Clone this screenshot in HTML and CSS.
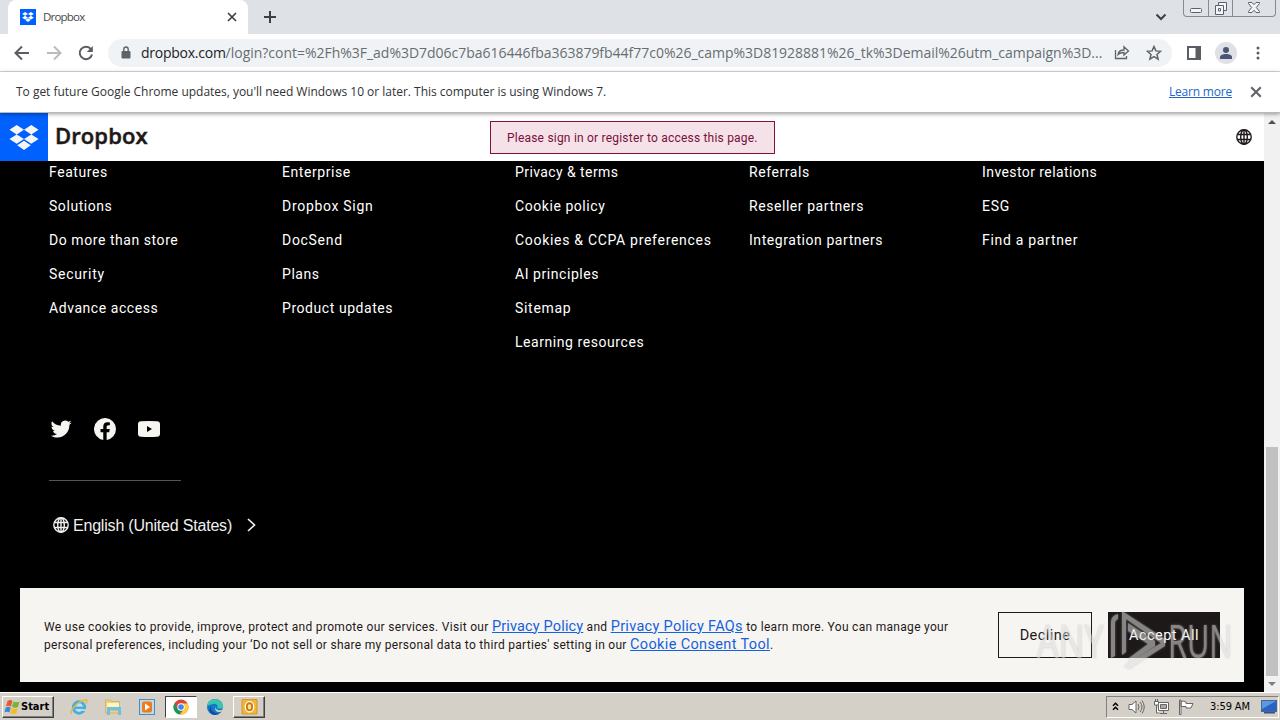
FILE: index.html
```html
<!DOCTYPE html>
<html lang="en">
<head>
<meta charset="utf-8">
<title>Dropbox</title>
<link rel="stylesheet" href="styles.css">
</head>
<body>
<svg class="defs" width="0" height="0">
  <symbol id="dropbox" viewBox="0 0 28 24"><path d="M7 0l7 4.500L7 9 0 4.500zM21 0l7 4.500L21 9l-7-4.500zM7 9l7 4.500L7 18l-7-4.500zM21 9l7 4.500-7 4.500-7-4.500zM14 15.200l6.500 4.200L14 24l-6.500-4.600z"/></symbol>
  <symbol id="globe" viewBox="0 0 16 16"><g fill="none" stroke="currentColor" stroke-width="1.400"><circle cx="8" cy="8" r="7.200"/><ellipse cx="8" cy="8" rx="3.300" ry="7.200"/><path d="M8 1v14M1 5.500h14M1 10.500h14"/></g></symbol>
  <symbol id="cross" viewBox="0 0 10 10"><path d="M1 1l8 8M9 1l-8 8" fill="none" stroke="currentColor" stroke-width="1.700"/></symbol>
</svg>
<div class="screen">
  <header class="tabstrip">
    <div class="tab">
      <span class="favicon"><svg width="12" height="10"><use href="#dropbox"/></svg></span>
      <span class="tab-title">Dropbox</span>
      <svg class="tab-close" width="10" height="10"><use href="#cross"/></svg>
    </div>
    <svg class="plus" width="12" height="12" viewBox="0 0 12 12"><path d="M6 0v12M0 6h12"/></svg>
    <svg class="chevron" width="12" height="8" viewBox="0 0 12 8"><path d="M1.500 1.500L6 6l4.500-4.500"/></svg>
    <div class="window-buttons">
      <span class="wb min"><svg width="12" height="5"><rect x=".5" y=".5" width="11" height="4" rx="1"/></svg></span>
      <span class="wb max"><svg width="14" height="13" viewBox="0 0 14 13"><path d="M4.500 3V.5h8v8H10M1.500 3.500h8v9h-8zM4.500 6.500h2v2.500h-2z"/></svg></span>
      <span class="wb close"><svg width="12" height="11" viewBox="0 0 12 11"><path d="M.5.500H4l2 2.200L8 .5h3.500v1L8.300 5.500l3.200 4v1H8L6 8.200 4 10.500H.5v-1l3.200-4-3.200-4z"/></svg></span>
    </div>
  </header>

  <div class="toolbar">
    <svg class="nav" width="16" height="16" viewBox="0 0 16 16"><path d="M15 8H2M8 1.500L1.500 8 8 14.500"/></svg>
    <svg class="nav off" width="16" height="16" viewBox="0 0 16 16"><path d="M1 8h13M8 1.500L14.500 8 8 14.500"/></svg>
    <svg class="nav reload" width="16" height="16" viewBox="0 0 16 16"><path d="M13 4.300A6.200 6.200 0 1 0 14 9.500"/><path class="solid" d="M14.800 1v6H8.800z"/></svg>
    <div class="omnibox">
      <svg class="lock" width="10" height="13" viewBox="0 0 10 13"><rect x=".5" y="5" width="9" height="7.500" rx="1"/><path d="M2.800 5V3.200a2.200 2.200 0 0 1 4.400 0V5"/></svg>
      <span class="url"><b>dropbox.com</b>/login?cont=%2Fh%3F_ad%3D7d06c7ba616446fba363879fb44f77c0%26_camp%3D81928881%26_tk%3Demail%26utm_campaign%3D...</span>
      <svg class="share" width="16" height="15" viewBox="0 0 16 15"><path d="M1.500 5v8.500h11V11M4 9.500c.5-3 2.500-4.500 6-4.500V1.800L14.500 6 10 10V7.500C7 7.500 5.500 8 4 9.500z"/></svg>
      <svg class="star" width="16" height="16" viewBox="0 0 16 16"><path d="M8 1.500l1.900 4.400 4.700.4-3.600 3.100 1.100 4.700L8 11.700 3.900 14.100 5 9.400 1.400 6.300l4.700-.4z"/></svg>
    </div>
    <svg class="panel" width="14" height="14" viewBox="0 0 14 14"><path d="M1 1h12v12H1z"/><path class="solid" d="M8.500 0H14v14H8.500z"/></svg>
    <span class="avatar"><svg width="12" height="12" viewBox="0 0 12 12"><circle cx="6" cy="3" r="3"/><path d="M0 12v-2c0-2 3-3 6-3s6 1 6 3v2z"/></svg></span>
    <svg class="dots" width="4" height="14"><circle cx="2" cy="2" r="1.500"/><circle cx="2" cy="7" r="1.500"/><circle cx="2" cy="12" r="1.500"/></svg>
  </div>

  <div class="infobar">
    <span class="notice">To get future Google Chrome updates, you'll need Windows 10 or later. This computer is using Windows 7.</span>
    <a class="learn">Learn more</a>
    <svg class="info-close" width="12" height="12"><use href="#cross"/></svg>
  </div>

  <div class="viewport">
    <main class="page">
      <div class="masthead">
        <span class="logo"><svg width="30" height="25"><use href="#dropbox"/></svg></span>
        <span class="wordmark">Dropbox</span>
        <div class="alert"><span>Please sign in or register to access this page.</span></div>
        <svg class="globe" width="16" height="16"><use href="#globe"/></svg>
      </div>
      <footer class="footer">
        <nav class="columns">
          <ul><li>Features</li><li>Solutions</li><li>Do more than store</li><li class="wide">Security</li><li>Advance access</li></ul>
          <ul><li>Enterprise</li><li class="wide">Dropbox Sign</li><li class="wide">DocSend</li><li>Plans</li><li>Product updates</li></ul>
          <ul><li class="tight">Privacy &amp; terms</li><li>Cookie policy</li><li class="wide">Cookies &amp; CCPA preferences</li><li>AI principles</li><li class="wide">Sitemap</li><li>Learning resources</li></ul>
          <ul><li>Referrals</li><li>Reseller partners</li><li>Integration partners</li></ul>
          <ul><li class="tight">Investor relations</li><li class="wide">ESG</li><li class="wide">Find a partner</li></ul>
        </nav>
        <div class="social">
          <svg width="22" height="22" viewBox="0 0 24 24"><path d="M23.600 4.900c-.8.400-1.700.6-2.700.8 1-.6 1.700-1.500 2-2.600-.9.500-1.900.9-3 1.100a4.700 4.700 0 0 0-8 4.300C8 8.300 4.500 6.400 2.200 3.600c-1.200 2.200-.7 4.900 1.500 6.300-.8 0-1.500-.2-2.100-.6 0 2.300 1.600 4.200 3.800 4.700-.7.200-1.400.2-2.100.1.600 1.900 2.300 3.200 4.400 3.300A9.500 9.500 0 0 1 .7 19.300c11 6 20.700-2 20.500-11.900.9-.7 1.800-1.500 2.400-2.500z"/></svg>
          <svg width="22" height="22" viewBox="0 0 24 24"><path d="M24 12a12 12 0 1 0-13.900 11.900v-8.400H7.100V12h3V9.400c0-3 1.800-4.700 4.500-4.700 1.300 0 2.700.2 2.700.2v3h-1.500c-1.500 0-2 .9-2 1.900V12h3.400l-.6 3.500h-2.800v8.400A12 12 0 0 0 24 12z"/></svg>
          <svg width="22" height="22" viewBox="0 0 22 22"><path fill-rule="evenodd" d="M3 3.300q8-.6 16 0 3 .2 3 3v9.400q0 2.800-3 3-8 .6-16 0-3-.2-3-3V6.300q0-2.800 3-3zM9 8v6l5-3z"/></svg>
        </div>
        <div class="rule"></div>
        <div class="language">
          <svg width="16" height="16"><use href="#globe"/></svg>
          <span>English (United States)</span>
          <svg class="arrow" width="9" height="14" viewBox="0 0 9 14"><path d="M1 1l6.500 6L1 13"/></svg>
        </div>
        <section class="consent">
          <p><span class="first">We use cookies to provide, improve, protect and promote our services. Visit our</span> <a class="l1">Privacy Policy</a> and <a class="l2">Privacy Policy FAQs</a> to learn more. You can manage your<br><span class="second">personal preferences, including your ‘Do not sell or share my personal data to third parties' setting in our</span> <a class="l3">Cookie Consent Tool</a>.</p>
          <button class="decline">Decline</button>
          <button class="accept">Accept All</button>
        </section>
      </footer>
    </main>
    <div class="scrollbar"><i class="up"></i><div class="thumb"></div><i class="down"></i></div>
    <div class="watermark">
      <span class="any">ANY</span>
      <svg width="58" height="64" viewBox="0 0 58 64"><path d="M2 49V13q0-6 7-8v5q-3 1-3 4v33zM13 2l43 28v7L20 60l-5-3 37-23-35-24v33l-4 3zM19 14l27 18v5L20 54v-5l19-14-20-13z"/></svg>
      <span class="run">RUN</span>
    </div>
  </div>

  <div class="taskbar">
    <div class="start"><svg width="17" height="16" viewBox="0 0 16 16"><path fill="#e75a2b" d="M3 2q3-2 5 0L6.500 7.500q-2-1.500-5-.3z"/><path fill="#75b43b" d="M9 2.500q3 1.500 6 0L13.500 8q-3 1.500-6-.2z"/><path fill="#3e88d0" d="M1.200 8.500q3-1.500 5 0L5 13.500q-2-1.300-5-.2z"/><path fill="#f4bd28" d="M7.200 9q3 1.500 6 0L12 14.500q-3 1.300-6-.3z"/></svg><b>Start</b></div>
    <span class="app"><svg width="18" height="18" viewBox="0 0 18 18"><circle cx="9" cy="9.500" r="5.700" fill="#bfe6f8" stroke="#4badde" stroke-width="3"/><path d="M4 9.800h11" stroke="#4badde" stroke-width="2.500"/><path d="M12 12h5" stroke="#d4d0c8" stroke-width="1.800"/><path d="M1.500 16C-1 12 10 2 16.500 2c1 1 .3 2.500-.5 3.500" fill="none" stroke="#e9b93a" stroke-width="1.400"/></svg></span>
    <span class="app"><svg width="18" height="18" viewBox="0 0 18 18"><path fill="#edd27c" stroke="#c3a556" stroke-width=".6" d="M1.500 2h5l1 1.500h8V15h-14z"/><path fill="#fff3c0" d="M3 5h12v5H3z"/><path fill="#74bedc" d="M3 9h14v8h-3v-4.500H6V17H3z"/></svg></span>
    <span class="app"><svg width="18" height="18" viewBox="0 0 18 18"><rect x="1.500" y="1.500" width="15" height="15" fill="#b9dcf1" stroke="#4a8dbd"/><rect x="4" y="3.500" width="10" height="11" rx="2" fill="#ef7c18"/><path fill="#fff" d="M7 5.500v7L12 9z"/></svg></span>
    <span class="app active"><svg width="16" height="16" viewBox="0 0 16 16"><circle cx="8" cy="8" r="7.500" fill="#db4437"/><path fill="#0f9d58" d="M1.500 4.200L5 10.500l3.500 1L6.500 15.400A7.500 7.500 0 0 1 1.500 4.200z"/><path fill="#ffcd40" d="M8 4.500h6.700A7.500 7.500 0 0 1 6.800 15.400L11 9.800z"/><circle cx="8" cy="8" r="3.700" fill="#fff"/><circle cx="8" cy="8" r="2.800" fill="#4285f4"/></svg></span>
    <span class="app"><svg width="18" height="18" viewBox="0 0 18 18"><circle cx="9" cy="9" r="8" fill="#1478c8"/><path fill="#39c6b1" d="M1 8C2 2 7 .5 11 1.400c5 1.200 7 5.600 5.600 9H11c2-3-1-5-4-4.500S2 7.500 1 8z"/><path fill="#0c4f9e" d="M5 8c-1 5 4 8 8 7.500-4 3-9 1-9.500-3C3.400 10 4 8.500 5 8z"/><path fill="#d4d0c8" d="M10 8c-1 2 0 4 3 4.300 2 .2 3-.3 4-1.300l1 2-4 1c-4 0-6-2-4-6z"/></svg></span>
    <span class="app raised"><svg width="17" height="17" viewBox="0 0 17 17"><path fill="#f2b53a" stroke="#d9971f" d="M1 1.500h15v14.500H1z"/><ellipse cx="8.500" cy="8.800" rx="3" ry="3.900" fill="#f7cf72" stroke="#fff" stroke-width="3.600"/><ellipse cx="8.500" cy="8.800" rx="2.700" ry="3.600" fill="#f9dc95" stroke="#c97908" stroke-width="1.800"/></svg></span>
    <div class="tray">
      <svg width="7" height="9" viewBox="0 0 7 9"><path class="black" d="M1 3.800l2.500-2.500L6 3.800M1 7.800l2.500-2.500L6 7.800"/></svg>
      <svg class="sound" width="17" height="16" viewBox="0 0 17 16"><path d="M1 5.500h3L8 2v12l-4-3.500H1z"/><path class="waves" d="M10 5q2 3 0 6M12 3q4 5 0 10M14 1.500q4.500 6.500 0 13"/></svg>
      <svg class="net" width="17" height="16" viewBox="0 0 17 16"><path d="M5.500 3.500h10v8h-10zM7 14.500h7M10.500 11.500v3M1.500 2.500h4v3.500h-4zM3.500 6v8h3M2.500 0v2.500M4.500 0v2.500"/><path class="screenfill" d="M7.500 5.500h6v4h-6z"/></svg>
      <svg class="flag" width="17" height="16" viewBox="0 0 17 16"><path d="M1.500 1v14.500h1.500V1zM3 2.500q3-1 5 .5v1.500h7L13 9H8V7.500H3z"/></svg>
      <span class="clock">3:59 AM</span>
      <svg class="desk" width="16" height="14" viewBox="0 0 16 14"><rect x=".5" y=".5" width="15" height="11" fill="#2a63c4" stroke="#4a688f"/><path fill="#5b98e4" d="M1 1h14L1 9z"/><path fill="#32547f" d="M3 12h11v1.500H3z"/></svg>
    </div>
  </div>
</div>
</body>
</html>
```
FILE: styles.css
```css
* { box-sizing: border-box; }
body { margin: 0; overflow: hidden; background: #000; }
svg { display: block; flex: none; }
.defs { position: absolute; }
.screen { width: 1280px; height: 720px; display: flex; flex-direction: column; font-family: "Open Sans", "Noto Sans", sans-serif; white-space: nowrap; }

.tabstrip { height: 34px; background: #dee1e6; display: flex; flex: none; padding-left: 8px; }
.tab { width: 240px; background: #fff; border-radius: 8px 8px 0 0; display: flex; align-items: center; padding: 0 11px 0 12px; }
.favicon { width: 16px; height: 16px; background: #0061fe; fill: #fff; display: flex; align-items: center; justify-content: center; }
.tab-title { font-size: 11.500px; color: #45494d; margin: -1px 0 0 7px; flex: 1; letter-spacing: -.8px; letter-spacing: -.85px; }
.tab-title { letter-spacing: -.8px; }
.tab-close { color: #3c4043; }
.plus { margin: 11px 0 0 16px; fill: none; stroke: #3c4043; stroke-width: 2; }
.chevron { margin: 13px 16px 0 auto; fill: none; stroke: #3c4043; stroke-width: 2; }
.window-buttons { display: flex; width: 93px; height: 17px; margin-right: 4px; border: 1px solid #858a98; border-top: 0; border-radius: 0 0 4px 4px; }
.wb { display: flex; justify-content: center; width: 25px; border-right: 1px solid #858a98; }
.wb svg { fill: #f4f5f8; stroke: #5c606c; }
.min { padding-top: 8px; }
.max { padding-top: 2px; }
.close { width: 42px; border: 0; padding-top: 2px; }

.toolbar { height: 38px; flex: none; background: #fff; border-bottom: 1px solid #dadce0; display: flex; align-items: center; padding-left: 14px; }
.nav { fill: none; stroke: #5a5d61; stroke-width: 2; margin-right: 16px; }
.off { stroke: #b9bbbe; }
.reload { margin-right: 14px; }
.solid { fill: #5a5d61; stroke: none; }
.omnibox { width: 1064px; height: 28px; border-radius: 14px; background: #f0f3f5; display: flex; align-items: center; padding-left: 13px; }
.lock { fill: #5f6368; }
.lock path { fill: none; stroke: #5f6368; stroke-width: 1.400; }
.url { width: 963px; margin: 0 10px; font-size: 14px; letter-spacing: -.02px; color: #696d72; }
.url b { font-weight: 400; color: #202124; letter-spacing: -.25px; }
.share, .star { fill: none; stroke: #5f6368; stroke-width: 1.300; }
.star { margin-left: 16px; stroke-width: 1.500; }
.panel { margin-left: 15px; fill: none; stroke: #5a5d61; stroke-width: 2; }
.avatar { width: 22px; height: 22px; margin: 0 19px 0 14px; border-radius: 50%; background: #dee1e6; fill: #4d5675; display: flex; align-items: center; justify-content: center; }
.dots { fill: #5a5d61; }

.infobar { height: 41px; flex: none; background: #fff; display: flex; align-items: center; padding-left: 16px; font-size: 12px; color: #303236; border-bottom: 1px solid #b9b9b9; position: relative; z-index: 1; box-shadow: 0 1px 4px #0006; }
.notice { flex: 1; margin-top: -2px; letter-spacing: -.02px; }
.learn { color: #2367c9; text-decoration: underline; width: 63px; margin-top: -2px; letter-spacing: -.2px; }
.info-close { margin: 0 18px; color: #5f6368; }

.viewport { height: 580px; flex: none; display: flex; position: relative; }
.page { width: 1264px; display: flex; flex-direction: column; }
.masthead { height: 48px; background: #fff; display: flex; align-items: center; }
.logo { width: 48px; height: 48px; background: #0061fe; fill: #f7f5f2; display: flex; align-items: center; justify-content: center; }
.wordmark { width: 442px; padding-left: 7px; font: 600 22px/36px "Open Sans", sans-serif; color: #1e1919; margin-top: -5px; letter-spacing: .1px; -webkit-text-stroke: .5px #1e1919; }
.alert { width: 285px; height: 33px; border: 1px solid #80103f; background: #f5e1e8; color: #780f3c; font: 12px/33px Roboto, sans-serif; letter-spacing: .21px; padding-left: 16px; margin-top: 1px; }
.globe { margin: 0 12px 0 auto; color: #1e1919; }
.footer { height: 532px; background: #000; color: #fff; fill: #f7f5f2; font-family: Roboto, "Liberation Sans", sans-serif; padding: 0 20px; }
.columns { height: 257px; padding-left: 29px; display: grid; grid-template-columns: 233px 233px 234px 233px 200px; overflow: hidden; }
.columns ul { list-style: none; margin: -6px 0 0; padding: 0; font-size: 14px; line-height: 34px; letter-spacing: .56px; }
.columns .tight { letter-spacing: .42px; }
.columns .wide { letter-spacing: .7px; }
.social { display: flex; gap: 22px; padding-left: 30px; }
.rule { width: 132px; height: 1px; background: #555; margin: 40px 0 0 29px; }
.language { display: flex; align-items: center; margin: 34px 0 0 33px; height: 20px; font: 16px/20px "Liberation Sans", sans-serif; color: #f0f0f0; }
.language span { margin: 2px 15px 0 4px; letter-spacing: -.2px; }
.arrow { fill: none; stroke: #f0f0f0; stroke-width: 1.700; }
.consent { margin-top: 53px; height: 94px; background: #f7f5f2; color: #1e1919; display: flex; align-items: center; padding: 0 24px; }
.consent p { width: 954px; margin: 1px 0 0; font-size: 12px; line-height: 18px; letter-spacing: .3px; }
.consent .first { letter-spacing: .31px; }
.consent .second { letter-spacing: .29px; }
.consent a { color: #1561dc; text-decoration: underline; font-size: 14.500px; line-height: 16px; letter-spacing: .15px; }
.consent .l2 { letter-spacing: .3px; }
.consent .l3 { letter-spacing: .36px; }
.consent button { height: 46px; padding: 0; margin: 0; border: 1px solid #1e1919; font: 14.500px Roboto, sans-serif; letter-spacing: .45px; background: none; color: #1e1919; }
.consent .decline { width: 94px; margin-right: 16px; }
.consent .accept { width: 112px; background: #1e1919; color: #fff; }
.scrollbar { width: 16px; background: #f1f1f1; display: flex; flex-direction: column; align-items: center; padding: 7px 0 7px; }
.scrollbar i { border: 4px solid transparent; }
.scrollbar .up { border-top: 0; border-bottom-color: #505050; }
.scrollbar .down { border-bottom: 0; border-top-color: #808080; margin-top: auto; }
.thumb { width: 12px; height: 229px; margin-top: 323px; background: #c1c1c1; }
.watermark { position: absolute; left: 1037px; top: 496px; display: flex; align-items: center; opacity: .55; color: #ddd; fill: #ddd; filter: drop-shadow(0 0 1px #aaa); font: 45px/64px "Open Sans", sans-serif; pointer-events: none; }
.watermark span { width: 70px; transform-origin: left; }
.watermark .any { transform: scaleX(.76); }
.watermark .run { width: 62px; transform: scaleX(.68); }
.watermark svg { margin-left: 2px; margin-right: 1px; }

.taskbar { height: 28px; margin-top: -1px; position: relative; flex: none; background: #d4d0c8; border-top: 1px solid #fff; display: flex; align-items: center; padding-left: 2px; }
.start { width: 52px; height: 22px; margin-right: 9px; display: flex; align-items: center; padding-left: 1px; font: 700 11px "DejaVu Sans Condensed", "DejaVu Sans", sans-serif; color: #000; border: 1px solid; border-color: #fff #404040 #404040 #fff; box-shadow: inset -1px -1px #808080; }
.app { width: 32px; height: 22px; margin-right: 2px; display: flex; align-items: center; justify-content: center; }
.active { background: #fff; border: 1px solid; border-color: #404040 #fff #fff #404040; }
.raised { border: 1px solid; border-color: #fff #404040 #404040 #fff; box-shadow: inset -1px -1px #808080; }
.tray { margin-left: auto; margin-right: 1px; width: 173px; height: 22px; border: 1px solid; border-color: #808080 #fff #fff #808080; display: flex; align-items: center; padding-left: 5px; }
.tray svg { fill: #fff; stroke: #666; }
.tray .black { fill: none; stroke: #000; stroke-width: 1.500; }
.tray .waves { fill: none; }
.tray .sound { margin-left: 9px; }
.tray .net, .tray .flag { margin-left: 8px; }
.screenfill { fill: #aaa; }
.clock { width: 51px; margin-left: 15px; font: 11px "DejaVu Sans Condensed", sans-serif; letter-spacing: -.1px; color: #000; }
.tray .desk { stroke: none; }
```
